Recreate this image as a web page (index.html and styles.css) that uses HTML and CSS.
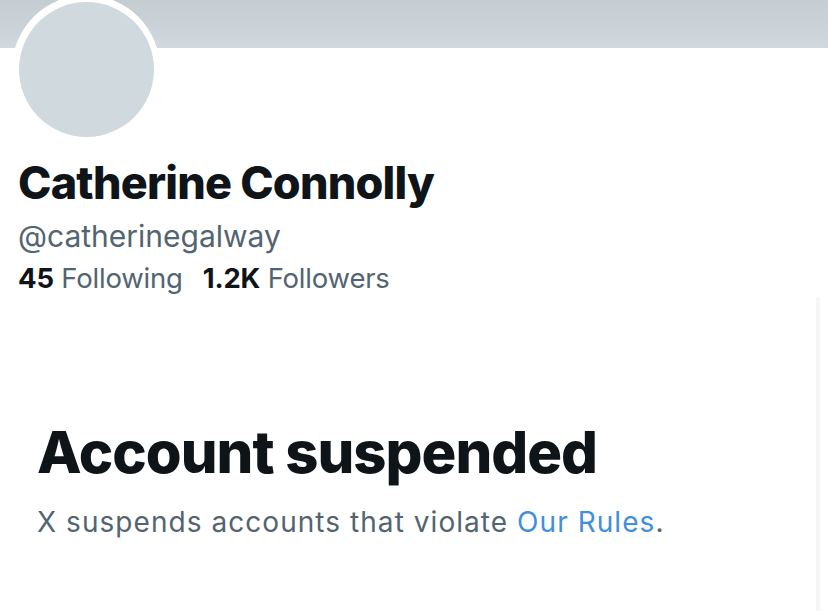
FILE: index.html
```html
<!DOCTYPE html>
<html>
<head>
<meta charset="utf-8">
<link rel="stylesheet" href="styles.css">
</head>
<body>
<div class="page">
  <div class="banner"></div>
  <div class="profile">
    <div class="avatar"><div class="avatar-fill"></div></div>
    <h1 class="name">Catherine Connolly</h1>
    <div class="handle">@catherinegalway</div>
    <div class="stats">
      <span class="stat"><b>45</b> Following</span>
      <span class="stat"><b>1.2K</b> Followers</span>
    </div>
  </div>
  <div class="suspended">
    <h2 class="title">Account suspended</h2>
    <p class="desc">X suspends accounts that violate <a href="#">Our Rules</a>.</p>
  </div>
  <div class="rail"></div>
</div>
</body>
</html>
```
FILE: styles.css
```css
html, body {
  margin: 0;
  padding: 0;
  background: #ffffff;
}
body {
  font-family: Inter, "Noto Sans", "Liberation Sans", sans-serif;
  color: #0f1419;
  overflow: hidden;
}
.page {
  position: relative;
  width: 828px;
  height: 611px;
  overflow: hidden;
}
.banner {
  height: 48px;
  background: linear-gradient(180deg, #c5cdd1 0%, #cbd3d8 60%, #d1d9de 100%);
}
.profile {
  padding-left: 12px;
}
.avatar {
  width: 148px;
  height: 148px;
  margin-top: -53px;
  border-radius: 50%;
  background: #ffffff;
  display: flex;
  align-items: center;
  justify-content: center;
  position: relative;
}
.avatar-fill {
  width: 135px;
  height: 135px;
  border-radius: 50%;
  background: #cfd9de;
}
.name {
  margin: 13px 0 0 6px;
  font-size: 45px;
  font-weight: 800;
  letter-spacing: -0.8px;
  line-height: 54px;
}
.handle {
  margin: 6px 0 0 6px;
  font-size: 30px;
  color: #536471;
  line-height: 40px;
}
.stats {
  margin: 2px 0 0 6px;
  display: flex;
  gap: 20px;
  font-size: 27.5px;
  letter-spacing: -0.2px;
  color: #536471;
  line-height: 40px;
}
.stat b {
  color: #0f1419;
  font-weight: 700;
}
.suspended {
  padding: 119px 0 0 37px;
}
.title {
  margin: 0;
  font-size: 58px;
  font-weight: 800;
  letter-spacing: -1px;
  line-height: 70px;
}
.desc {
  margin: 17px 0 0 0;
  font-size: 28px;
  letter-spacing: 1.05px;
  color: #536471;
  line-height: 36px;
}
.desc a {
  color: #3f8fdc;
  text-decoration: none;
}
.rail {
  position: absolute;
  right: 8px;
  top: 298px;
  bottom: 0;
  width: 4px;
  background: #f6f6f6;
}
```
